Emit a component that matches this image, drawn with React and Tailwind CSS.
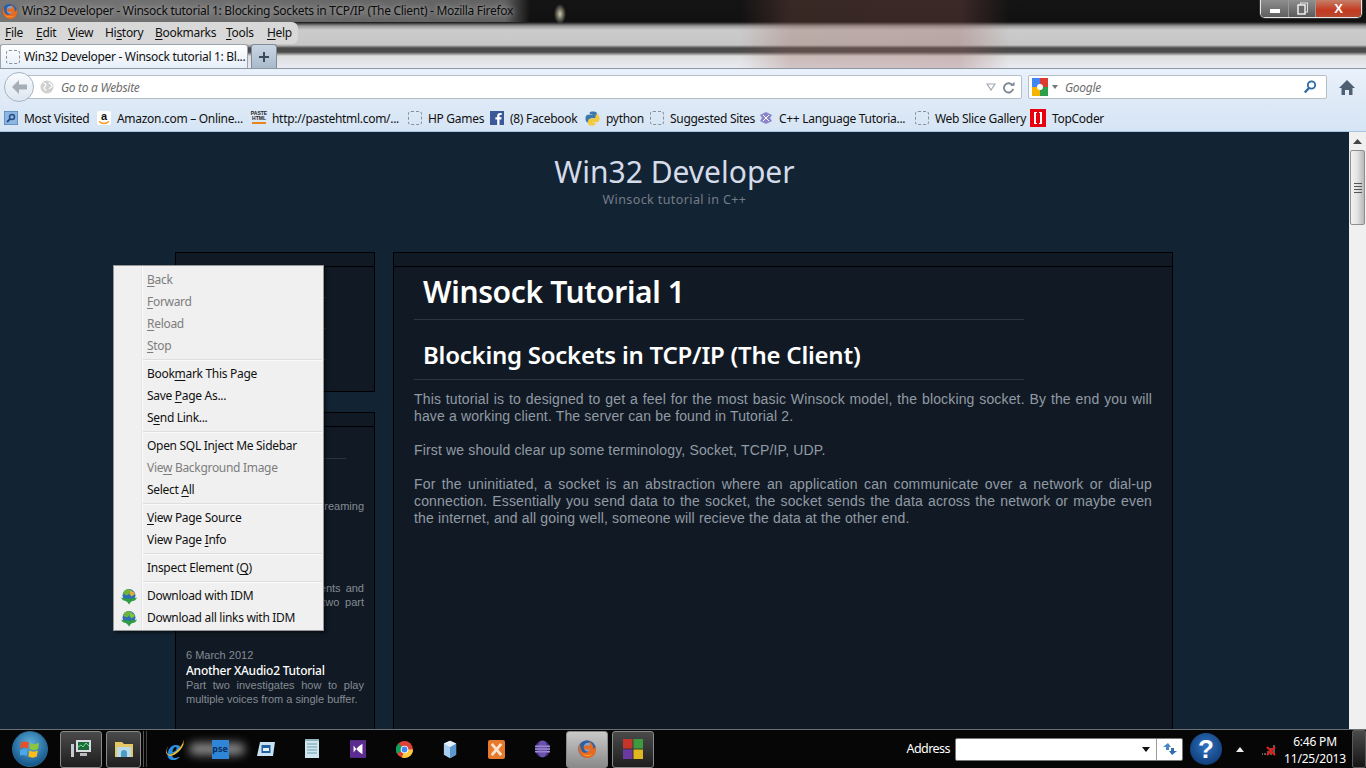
import React from "react";

const ui = "font-['Noto_Sans',sans-serif] text-[12px] tracking-[-0.3px]";

function U({ children }) {
  return <span className="underline underline-offset-2">{children}</span>;
}

function Fox({ size = 16 }) {
  return (
    <svg width={size} height={size} viewBox="0 0 16 16" className="shrink-0">
      <circle cx="8" cy="8" r="7" fill="#2f5f9e" />
      <circle cx="9" cy="6.5" r="3.6" fill="#7fa8d8" />
      <path d="M2.5 3.5C1 6 .8 10 3.2 12.8c2.6 3 7.6 3.2 10.2.4 1.8-2 2.3-5 1.2-7.4-.3 1.2-.9 1.9-1.6 2.2.2-2.4-1.2-5-3.6-6.4 1 1.6 1 3 .4 4-1-.8-2.6-.9-3.6-.2-.9.7-1 2 0 2.7 1.2.8 3 .5 4-.3-.2 2-2 3.4-4 3.2C3.800 10.800 2.500 7.500 2.500 3.500z" fill="#e66a1f" />
      <path d="M4 11.500c2 2.400 6 2.600 8.200.6-2.200 1-5.800.8-8.200-.6z" fill="#f9b233" />
    </svg>
  );
}

function Dashed() {
  return <span className="w-[14px] h-[14px] shrink-0 rounded-[3px] border border-dashed border-[#8a8f96]" />;
}

function IdmIcon({ alt }) {
  return (
    <svg width="18" height="17" viewBox="0 0 18 17">
      <circle cx="9" cy="7.500" r="6.500" fill="#2f6db5" />
      <path d="M4 3c2-2 6-2.500 8-.5-1 2-3 2.500-4 4.500-2 .5-3-.5-5-1z" fill="#6cb33f" />
      <path d="M10 3c2-.5 4 .5 5 3l-3.500 2.500L9.500 6z" fill={alt ? "#7cc243" : "#e0b030"} />
      <path d="M1 9.500c2.500 1.500 13.500 1.500 16 0-1 3-3.500 3.500-5.500 3.500L9 16.500 6.500 13C4 13 2 12 1 9.500z" fill="#2f9e3c" />
    </svg>
  );
}

function MenuItem({ disabled, icon, children }) {
  return (
    <div className={`h-[22px] flex items-center ${disabled ? "text-[#7d7d7d]" : "text-[#111]"}`}>
      <span className="w-[29px] flex items-center justify-center">{icon}</span>
      <span className="pl-[4px]">{children}</span>
    </div>
  );
}

function MenuSep() {
  return (
    <div className="h-[6px] flex items-center pl-[29px] pr-[1px]">
      <div className="h-[2px] w-full bg-[#fafafa] border-t border-[#dedede]" />
    </div>
  );
}

function ContextMenu() {
  return (
    <div className={`${ui} absolute left-[113px] top-[265px] w-[211px] h-[366px] bg-[#f0f0f0] border border-[#979797] shadow-[2px_2px_3px_rgba(0,0,0,0.5)] pt-[3px] z-20`}>
      <div className="absolute left-[27px] top-0 bottom-0 w-[2px] bg-[#e6e6e6] border-r border-[#fbfbfb]" />
      <div className="relative">
        <MenuItem disabled><U>B</U>ack</MenuItem>
        <MenuItem disabled><U>F</U>orward</MenuItem>
        <MenuItem disabled><U>R</U>eload</MenuItem>
        <MenuItem disabled><U>S</U>top</MenuItem>
        <MenuSep />
        <MenuItem>Book<U>m</U>ark This Page</MenuItem>
        <MenuItem>Save <U>P</U>age As...</MenuItem>
        <MenuItem>S<U>e</U>nd Link...</MenuItem>
        <MenuSep />
        <MenuItem>Open SQL Inject Me Sidebar</MenuItem>
        <MenuItem disabled>Vie<U>w</U> Background Image</MenuItem>
        <MenuItem>Select <U>A</U>ll</MenuItem>
        <MenuSep />
        <MenuItem><U>V</U>iew Page Source</MenuItem>
        <MenuItem>View Page <U>I</U>nfo</MenuItem>
        <MenuSep />
        <MenuItem>Inspect Element (<U>Q</U>)</MenuItem>
        <MenuSep />
        <MenuItem icon={<IdmIcon />}>Download with IDM</MenuItem>
        <MenuItem icon={<IdmIcon alt />}>Download all links with IDM</MenuItem>
      </div>
    </div>
  );
}

function TitleBar() {
  return (
    <div className="h-[22px] flex items-center bg-[linear-gradient(90deg,rgba(150,150,150,0.75)_0,rgba(130,130,130,0.7)_505px,rgba(0,0,0,0)_530px)]">
      <span className="pl-[1px] pr-[4px]"><Fox size={17} /></span>
      <span className={`${ui} text-[#0c0c0c] text-[12.500px] tracking-[-0.1px] [text-shadow:0_0_6px_rgba(255,255,255,0.7)]`}>
        Win32 Developer - Winsock tutorial 1: Blocking Sockets in TCP/IP (The Client) - Mozilla Firefox
      </span>
      <div className="ml-auto mr-[4px] self-start flex h-[18px] w-[102px] rounded-b-[5px] border border-t-0 border-[#e6e6e6] overflow-hidden shadow-[0_0_0_1px_#333]">
        <div className="w-[28px] flex items-center justify-center bg-[linear-gradient(#8d8d8d,#5f5f5f)] border-r border-[#999]">
          <span className="block w-[10px] h-[4px] mt-[5px] bg-white" />
        </div>
        <div className="w-[27px] flex items-center justify-center bg-[linear-gradient(#8f8f8f,#5a5a5a)] border-r border-[#999]">
          <svg width="11" height="13" viewBox="0 0 11 13"><rect x="3.500" y="1" width="7" height="9" fill="none" stroke="#ddd" /><rect x="1" y="3" width="7" height="9" fill="#6a6a6a" stroke="#eee" strokeWidth="1.500" /></svg>
        </div>
        <div className="flex-1 flex items-center justify-center bg-[linear-gradient(#c5806a,#c43a20_60%,#b84a30)] font-['Liberation_Sans',sans-serif] font-bold text-[13px] text-white">
          X
        </div>
      </div>
    </div>
  );
}

function MenuBar() {
  const items = [
    ["F", "ile", "w-[31px]"],
    ["E", "dit", "w-[32px]"],
    ["V", "iew", "w-[37px]"],
    ["", "History", "w-[50px]"],
    ["B", "ookmarks", "w-[71px]"],
    ["T", "ools", "w-[41px]"],
    ["H", "elp", "w-[30px]"],
  ];
  return (
    <div className="h-[22px] w-[298px] rounded-r-[6px] bg-[#d8d8d8] flex items-center pl-[5px]">
      {items.map(([a, b, w]) => (
        <span key={b} className={`${ui} text-[#111] ${w}`}>
          {a ? <U>{a}</U> : null}
          {a ? b : <>Hi<U>s</U>tory</>}
        </span>
      ))}
    </div>
  );
}

function TabBar() {
  return (
    <div className="h-[24px] flex items-end">
      <div className="h-[24px] w-[248px] rounded-t-[3px] bg-[linear-gradient(#ffffff,#e6eff9)] border border-b-0 border-[#9aa5b2] flex items-center pl-[5px] gap-[4px]">
        <Dashed />
        <span className={`${ui} text-[#111] text-[12.500px] whitespace-nowrap`}>Win32 Developer - Winsock tutorial 1: Bl...</span>
      </div>
      <div className="ml-[3px] h-[24px] w-[26px] rounded-t-[3px] bg-[linear-gradient(#c9d6e4,#a9bacb)] border border-b-0 border-[#7f8b98] flex items-center justify-center">
        <svg width="12" height="12" viewBox="0 0 12 12"><path d="M6 1v10M1 6h10" stroke="#3c4a5a" strokeWidth="2" /></svg>
      </div>
    </div>
  );
}

function NavBar() {
  return (
    <div className="h-[37px] relative flex items-center border-t border-[#8c97a3] bg-[linear-gradient(#e9f1fb,#dde9f6)]">
      <div className="ml-[22px] w-[1000px] h-[24px] bg-white border border-[#b4bfca] rounded-[2px] flex items-center pl-[17px] pr-[6px]">
        <svg width="14" height="14" viewBox="0 0 14 14" className="shrink-0">
          <circle cx="7" cy="7" r="6.500" fill="#cfcfcf" />
          <path d="M3 3c2 0 3 1 3 2S4 6.500 4 8s2 1 2 3M9 2c0 2 3 2 3 4s-2 1-3 3" stroke="#fff" strokeWidth="1.200" fill="none" />
        </svg>
        <span className={`${ui} italic text-[#6e6e6e] ml-[7px] pt-[1px]`}>Go to a Website</span>
        <svg width="10" height="8" viewBox="0 0 10 8" className="ml-auto"><path d="M1 1h8L5 7z" fill="none" stroke="#a0a8b0" strokeWidth="1.200" /></svg>
        <svg width="13" height="13" viewBox="0 0 14 14" className="ml-[6px]"><path d="M11.500 5A5 5 0 1 0 12 8.500" fill="none" stroke="#7c8894" strokeWidth="2" /><path d="M9 5h4.500V.8z" fill="#7c8894" /></svg>
      </div>
      <div className="absolute left-[4px] top-[3px] w-[30px] h-[30px] rounded-full bg-[linear-gradient(#f9fbfe,#dce6f1)] border border-[#a9b4c0] flex items-center justify-center">
        <svg width="18" height="16" viewBox="0 0 18 16"><path d="M9 1 2 8l7 7v-4.500h8v-5H9z" fill="#a6adb6" /></svg>
      </div>
      <div className="ml-[6px] w-[299px] h-[24px] bg-white border border-[#b4bfca] rounded-[2px] flex items-center pl-[3px] pr-[9px]">
        <svg width="16" height="18" viewBox="0 0 16 18" className="shrink-0">
          <rect width="8" height="9" fill="#4285f4" />
          <rect x="8" width="8" height="9" fill="#dd3b2f" />
          <rect y="9" width="8" height="9" fill="#f4b400" />
          <rect x="8" y="9" width="8" height="9" fill="#2d9e4a" />
          <circle cx="8" cy="9" r="3" fill="#fff" />
        </svg>
        <svg width="6" height="4" viewBox="0 0 6 4" className="ml-[4px]"><path d="M0 0h6L3 4z" fill="#777" /></svg>
        <span className={`${ui} italic text-[#6e6e6e] ml-[7px] pt-[1px]`}>Google</span>
        <svg width="14" height="14" viewBox="0 0 14 14" className="ml-auto"><circle cx="8.500" cy="5" r="3.700" fill="none" stroke="#2b6aa6" strokeWidth="1.800" /><path d="M6 8 1.800 12.500" stroke="#2b6aa6" strokeWidth="2.400" /></svg>
      </div>
      <svg width="16" height="15" viewBox="0 0 16 15" className="ml-[12px]"><path d="M8 0 0 8h2.500v7H6v-5h4v5h3.500V8H16z" fill="#4e6072" /></svg>
    </div>
  );
}

function Bm({ icon, text, w }) {
  return (
    <div className={`flex items-center gap-[6px] shrink-0 ${w}`}>
      {icon}
      <span className={`${ui} text-[#111] whitespace-nowrap pt-[1px]`}>{text}</span>
    </div>
  );
}

function BookmarksBar() {
  const I = "w-[14px] h-[14px] shrink-0";
  return (
    <div className="h-[26px] flex items-center pl-[4px] bg-[linear-gradient(#dde9f6,#d6e5f5)] border-b border-[#a9c4e2] box-content">
      <Bm w="w-[93px]" text="Most Visited" icon={
        <svg viewBox="0 0 14 14" className={I}><rect width="14" height="14" rx="1" fill="#8fb6e0" stroke="#3a6ea8" /><circle cx="8" cy="6" r="2.500" fill="none" stroke="#234f86" strokeWidth="1.500" /><path d="M6 8 3 11" stroke="#234f86" strokeWidth="1.800" /></svg>
      } />
      <Bm w="w-[155px]" text="Amazon.com – Online..." icon={
        <svg viewBox="0 0 14 14" className={I}><rect width="14" height="14" rx="2" fill="#fff" /><text x="7" y="9" fontSize="11" fontWeight="700" textAnchor="middle" fontFamily="Liberation Sans" fill="#111">a</text><path d="M2 10.500c3 2.400 7 2.400 10 0" stroke="#f59b1c" strokeWidth="1.500" fill="none" /></svg>
      } />
      <Bm w="w-[156px]" text="http://pastehtml.com/..." icon={
        <span className="w-[14px] h-[14px] shrink-0 flex flex-col items-center font-['Liberation_Sans',sans-serif] font-bold text-[5px] leading-[5px] text-[#222]">
          <span>PASTE</span><span>HTML</span><span className="w-full h-[2px] mt-[1px] bg-[#e8851c]" />
        </span>
      } />
      <Bm w="w-[82px]" text="HP Games" icon={<Dashed />} />
      <Bm w="w-[95px]" text="(8) Facebook" icon={
        <svg viewBox="0 0 14 14" className={I}><rect width="14" height="14" fill="#3b5998" /><path d="M9.500 14V8.500h1.800l.3-2.200H9.500V5c0-.6.200-1 1-1h1.200V2.100C11.400 2 10.800 2 10 2 8.300 2 7.200 3 7.200 4.800v1.500H5.400v2.200h1.800V14z" fill="#fff" /></svg>
      } />
      <Bm w="w-[65px]" text="python" icon={
        <svg viewBox="0 0 15 15" className="w-[15px] h-[15px] shrink-0"><path d="M7.400.5C4.500.5 4.700 1.800 4.700 1.800v1.500h2.800v.5H3.300S.5 3.500.5 7.600s2.400 3.900 2.400 3.900h1.500V9.700s-.1-2.400 2.400-2.400h2.800s2.300 0 2.300-2.200V2.600S12.500.5 7.400.5z" fill="#3b78ab" /><path d="M7.600 14.500c2.900 0 2.700-1.300 2.700-1.300v-1.500H7.500v-.5h4.200s2.800.3 2.800-3.800-2.400-3.900-2.400-3.900h-1.500v1.800s.1 2.400-2.400 2.400H5.400s-2.300 0-2.300 2.200v2.500s-.6 2.100 4.500 2.100z" fill="#f5c93a" /></svg>
      } />
      <Bm w="w-[109px]" text="Suggested Sites" icon={<Dashed />} />
      <Bm w="w-[156px]" text="C++ Language Tutoria..." icon={
        <svg viewBox="0 0 14 14" className={I}><path d="M1 4 7 1l6 3-2 3 2 3-6 3-6-3 2-3z" fill="#8a86c8" /><path d="M4 4l3 3 3-3M4 10l3-3 3 3" stroke="#fff" fill="none" /></svg>
      } />
      <Bm w="w-[115px]" text="Web Slice Gallery" icon={<Dashed />} />
      <Bm w="" text="TopCoder" icon={
        <span className="w-[16px] h-[18px] shrink-0 bg-[#e8000f] flex items-center justify-center gap-[2px]">
          <span className="w-[3px] h-[12px] border-l-2 border-y border-white" />
          <span className="w-[3px] h-[12px] border-r-2 border-y border-white" />
        </span>
      } />
    </div>
  );
}

function Panel({ className = "", children }) {
  return (
    <div className={`bg-[#111a24] border border-black ${className}`}>
      <div className="h-[14px] border-b border-black" />
      {children}
    </div>
  );
}

function Post({ date, title, lines, className = "" }) {
  return (
    <div className={className}>
      <div className="text-[11px] leading-[15px] text-[#858b93]">{date}</div>
      <div className="font-['Noto_Sans',sans-serif] font-medium text-[12px] tracking-[-0.25px] leading-[15px] text-white whitespace-nowrap">{title}</div>
      <p className="text-[11px] leading-[14px] text-[#858b93] text-justify">{lines}</p>
    </div>
  );
}

function Sidebar() {
  return (
    <div className="w-[200px] shrink-0">
      <Panel className="h-[140px]">
        <div className="ml-[10px] w-[140px]">
          <div className="h-[31px] border-b border-[#2a333e]" />
          <div className="h-[31px] border-b border-[#2a333e]" />
          <div className="h-[31px] border-b border-[#2a333e]" />
        </div>
      </Panel>
      <Panel className="mt-[20px] h-[400px] font-['Liberation_Sans',sans-serif]">
        <div className="px-[10px]">
          <div className="h-[32px] w-[160px] border-b border-[#2a333e]" />
          <Post
            className="mt-[10px]"
            date="1 April 2012"
            title="XAudio2 Streaming"
            lines="Play large audio files by streaming them from the disk."
          />
          <Post
            className="mt-[24px]"
            date="12 March 2012"
            title="An XAudio2 Tutorial"
            lines="An introduction to components and voices, in the first of this two part series on XAudio2."
          />
          <Post
            className="mt-[25px]"
            date="6 March 2012"
            title="Another XAudio2 Tutorial"
            lines="Part two investigates how to play multiple voices from a single buffer."
          />
        </div>
      </Panel>
    </div>
  );
}

function Main() {
  return (
    <Panel className="w-[780px] h-[560px] shrink-0">
      <div className="px-[20px]">
        <h1 className="h-[53px] pl-[9px] pb-[4px] flex items-center border-b border-[#2d3640] font-['Noto_Sans',sans-serif] font-semibold text-[30px] tracking-[-0.35px] text-white w-[610px]">
          Winsock Tutorial 1
        </h1>
        <h2 className="h-[60px] pl-[9px] pt-[10px] flex items-center border-b border-[#2d3640] font-['Noto_Sans',sans-serif] font-semibold text-[24px] tracking-[-0.24px] text-white w-[610px]">
          Blocking Sockets in TCP/IP (The Client)
        </h2>
        <div className="mt-[11px] font-['Liberation_Sans',sans-serif] text-[14px] leading-[17px] tracking-[0.15px] text-[#929aa4] text-justify">
          <p>This tutorial is to designed to get a feel for the most basic Winsock model, the blocking socket. By the end you will have a working client. The server can be found in Tutorial 2.</p>
          <p className="mt-[17px]">First we should clear up some terminology, Socket, TCP/IP, UDP.</p>
          <p className="mt-[17px]">For the uninitiated, a socket is an abstraction where an application can communicate over a network or dial-up connection. Essentially you send data to the socket, the socket sends the data across the network or maybe even the internet, and all going well, someone will recieve the data at the other end.</p>
        </div>
      </div>
    </Panel>
  );
}

function Scrollbar() {
  return (
    <div className="w-[17px] shrink-0 bg-[#f0f0f0] flex flex-col items-center">
      <svg width="9" height="5" viewBox="0 0 9 5" className="mt-[7px]"><path d="M0 5 4.500 0 9 5z" fill="#444" /></svg>
      <div className="mt-[6px] w-[15px] h-[75px] rounded-[2px] border border-[#8e8e8e] bg-[linear-gradient(90deg,#f2f2f2,#e4e4e4_45%,#b9b9b9)] flex flex-col items-center justify-center gap-[2px]">
        <span className="block w-[8px] h-[1px] bg-[#555]" />
        <span className="block w-[8px] h-[1px] bg-[#555]" />
        <span className="block w-[8px] h-[1px] bg-[#555]" />
        <span className="block w-[8px] h-[1px] bg-[#555]" />
      </div>
    </div>
  );
}

function TaskBtn({ w, active, children }) {
  return (
    <div className={`h-[37px] ${w} shrink-0 rounded-[3px] border border-[#8a8a8a] flex items-center justify-center ${active ? "bg-[linear-gradient(#c9c9c9,#8a8a8a)]" : "bg-[linear-gradient(#4a4a4a,#1e1e1e)]"}`}>
      {children}
    </div>
  );
}

function Pin({ children }) {
  return <div className="w-[46px] shrink-0 flex items-center justify-center">{children}</div>;
}

function Taskbar() {
  return (
    <div className="h-[39px] shrink-0 bg-[#060606] border-t border-[#6b6f73] flex items-center font-['Noto_Sans',sans-serif] relative">
      <div className="w-[60px] shrink-0 flex justify-center">
        <div className="w-[36px] h-[36px] rounded-full bg-[radial-gradient(circle_at_50%_35%,#5fb0dc,#1c5f92_70%,#0b3458)] border border-[#2a6d98] flex items-center justify-center">
          <svg width="20" height="18" viewBox="0 0 20 18">
            <path d="M1 2.500c3-1.500 5-1.500 8 0L8 8.500C5 7 3 7 0 8.500z" fill="#e8502a" />
            <path d="M10.500 3c3 1.500 5 1.500 8.500 0l-1 6c-3 1.500-5 1.500-8.500 0z" fill="#8cc63f" />
            <path d="M0 10c3-1.500 5-1.500 7.800 0l-1 6c-3-1.500-5-1.500-7.800 0z" fill="#4aa8e8" />
            <path d="M9.300 10.500c3 1.500 5 1.500 8.500 0l-1 6c-3 1.500-5 1.500-8.500 0z" fill="#fbbc1c" />
          </svg>
        </div>
      </div>
      <TaskBtn w="w-[42px]">
        <svg width="22" height="20" viewBox="0 0 22 20"><rect x="6" y="1" width="15" height="12" fill="#d8dce0" /><rect x="8" y="3" width="11" height="8" fill="#1c6b38" /><path d="M8 8l3-2 2 2 3-4 3 3" stroke="#6fe08f" fill="none" /><rect x="1" y="5" width="3" height="13" fill="#c8ccd0" /><rect x="10" y="14" width="7" height="3" fill="#b9bdc2" /></svg>
      </TaskBtn>
      <div className="w-[4px] shrink-0" />
      <TaskBtn w="w-[35px]">
        <svg width="20" height="20" viewBox="0 0 20 20"><path d="M1 3h7l2 2h9v13H1z" fill="#e6c766" /><rect x="3" y="8" width="14" height="10" fill="#b9dbe9" /><path d="M7 18v-4a3 3 0 0 1 6 0v4" fill="#4e9ac7" /></svg>
      </TaskBtn>
      <div className="w-[1px] h-[36px] ml-[2px] bg-[#555] shrink-0" />
      <div className="w-[1px] h-[36px] ml-[2px] mr-[3px] bg-[#444] shrink-0" />
      <div className="flex items-center ml-[1px] relative">
        <span className="absolute left-[38px] w-[56px] h-[12px] bg-[#8a8a8a] blur-[5px] rounded-full" />
        <Pin>
          <span className="relative font-['Liberation_Serif',serif] italic font-bold text-[32px] leading-none text-[#2b8fe0]">
            e
            <span className="absolute left-[-3px] top-[8px] w-[22px] h-[12px] rounded-[50%] border-b-2 border-l border-[#e8b830] -rotate-45" />
          </span>
        </Pin>
        <Pin><span className="relative w-[17px] h-[19px] bg-[#2f86d8] text-[#0b2f5c] text-[9px] font-bold flex items-center justify-center">pse</span></Pin>
        <Pin><svg width="18" height="16" viewBox="0 0 18 16"><path d="M3 1h15l-2 14H0z" fill="#c7e0f4" /><rect x="4.500" y="4" width="9" height="8" fill="#225f9e" /><rect x="6" y="7" width="6" height="3" fill="#e6f1fa" /></svg></Pin>
        <Pin><svg width="16" height="20" viewBox="0 0 16 20"><rect x="1" y="1" width="14" height="18" fill="#cfe6ee" /><path d="M3 5h10M3 8h10M3 11h10M3 14h10" stroke="#6f9fb4" /><rect x="1" y="0" width="14" height="2" fill="#8fb0bd" /></svg></Pin>
        <Pin><svg width="16" height="20" viewBox="0 0 18 20"><rect width="18" height="20" fill="#5c2d91" /><path d="M4 6l3 4-3 4V6zm10-2v12l-4-3-3-3 3-3z" fill="#fff" /></svg></Pin>
        <Pin>
          <svg width="17" height="17" viewBox="0 0 20 20">
            <circle cx="10" cy="10" r="10" fill="#db4437" />
            <path d="M10 10 1.300 15A10 10 0 0 1 3 2.900z" fill="#0f9d58" />
            <path d="M10 10h10a10 10 0 0 1-13 9.500z" fill="#ffcd40" />
            <circle cx="10" cy="10" r="4.500" fill="#fff" />
            <circle cx="10" cy="10" r="3.400" fill="#4285f4" />
          </svg>
        </Pin>
        <Pin><svg width="14" height="19" viewBox="0 0 16 20"><path d="M8 0l7 3v13l-7 4-7-4V3z" fill="#a9cdec" /><path d="M8 7v13l7-4V3z" fill="#5c97cf" /><path d="M1 3l7 4 7-4-7-3z" fill="#e4f1fb" /></svg></Pin>
        <Pin><svg width="17" height="19" viewBox="0 0 18 20"><rect width="18" height="20" rx="2" fill="#e8792b" /><path d="M4 4l10 12M14 4 4 16" stroke="#fbe3cf" strokeWidth="3" /></svg></Pin>
        <Pin><svg width="15" height="18" viewBox="0 0 16 18"><ellipse cx="8" cy="9" rx="8" ry="9" fill="#47308f" /><path d="M0 6h16M0 9h16M0 12h16" stroke="#d8cff0" /><ellipse cx="8" cy="9" rx="5" ry="9" fill="#8d78c8" opacity=".5" /></svg></Pin>
      </div>
      <div className="w-[1px] shrink-0" />
      <TaskBtn w="w-[42px]" active><Fox size={20} /></TaskBtn>
      <div className="w-[4px] shrink-0" />
      <TaskBtn w="w-[42px]">
        <svg width="20" height="20" viewBox="0 0 20 20"><rect width="9.500" height="9.500" fill="#c5352a" /><rect x="10.500" width="9.500" height="9.500" fill="#3e9a3e" /><rect y="10.500" width="9.500" height="9.500" fill="#6a3aa0" /><rect x="10.500" y="10.500" width="9.500" height="9.500" fill="#dfb81f" /></svg>
      </TaskBtn>
      <span className="ml-auto text-[12.500px] tracking-[-0.55px] text-white">Address</span>
      <div className="ml-[5px] w-[228px] h-[23px] bg-white border border-[#777] rounded-[2px] flex items-center justify-end">
        <svg width="8" height="5" viewBox="0 0 8 5"><path d="M0 0h8L4 5z" fill="#111" /></svg>
        <div className="ml-[6px] w-[26px] h-full border-l border-[#999] flex items-center justify-center">
          <svg width="16" height="14" viewBox="0 0 16 14"><path d="M6 1 1 5h3v3h3V5h2z" fill="#4a86c5" /><path d="M10 13l5-4h-3V6H9v3H7z" fill="#2f6fb0" /></svg>
        </div>
      </div>
      <div className="ml-[7px] w-[32px] h-[32px] rounded-full bg-[radial-gradient(circle_at_50%_40%,#2f73c0,#123f7c_75%,#0a2b58)] flex items-center justify-center font-['Liberation_Sans',sans-serif] font-bold text-[26px] leading-none text-white shrink-0">
        ?
      </div>
      <svg width="8" height="5" viewBox="0 0 8 5" className="ml-[14px]"><path d="M0 5h8L4 0z" fill="#eee" /></svg>
      <svg width="16" height="14" viewBox="0 0 16 14" className="ml-[17px]">
        <path d="M1 12h1M4 11v2M7 9v4M10 6v7M13 3v10" stroke="#777" strokeWidth="1.500" />
        <path d="M6 5l8 8M14 5l-8 8" stroke="#e0201c" strokeWidth="2.200" />
      </svg>
      <div className="ml-[7px] pt-[2px] w-[62px] text-center text-[12px] leading-[17px] tracking-[-0.2px] text-white">
        <div>6:46 PM</div>
        <div>11/25/2013</div>
      </div>
      <div className="ml-[6px] w-[14px] h-[38px] rounded-[2px] border border-[#5a5a5a] bg-[linear-gradient(#4a4a4a,#151515)]" />
    </div>
  );
}

export default function App() {
  return (
    <div className="relative w-screen h-screen overflow-hidden flex flex-col bg-[#122334]">
      <div className="shrink-0 [background:radial-gradient(ellipse_6px_10px_at_560px_14px,rgba(225,220,190,0.9),rgba(0,0,0,0)),linear-gradient(90deg,rgba(0,0,0,0)_0,rgba(0,0,0,0)_740px,rgba(150,95,80,0.28)_790px,rgba(150,90,85,0.3)_960px,rgba(0,0,0,0)_1010px),linear-gradient(#141414_0,#111_22px,#9a9a9a_26px,#cbcbcb_30px,#c6c6c6_45px,#4a4a4a_48px,#4a4a4a_52px,#dedede_56px,#e9ebf2_68px)]">
        <TitleBar />
        <MenuBar />
        <TabBar />
      </div>
      <div className="shrink-0">
        <NavBar />
        <BookmarksBar />
      </div>
      <div className="flex-1 flex min-h-0">
        <div className="flex-1 min-w-0 overflow-hidden">
          <div className="pt-[20px] h-[120px] text-center">
            <h1 className="font-['Noto_Sans',sans-serif] font-normal text-[30px] leading-[40px] text-[#d5dbe8]">Win32 Developer</h1>
            <div className="font-['Noto_Sans',sans-serif] text-[12.500px] leading-[16px] tracking-[0.4px] text-[#767d87]">Winsock tutorial in C++</div>
          </div>
          <div className="w-[998px] ml-[175px] flex gap-[18px]">
            <Sidebar />
            <Main />
          </div>
        </div>
        <Scrollbar />
      </div>
      <Taskbar />
      <ContextMenu />
    </div>
  );
}
